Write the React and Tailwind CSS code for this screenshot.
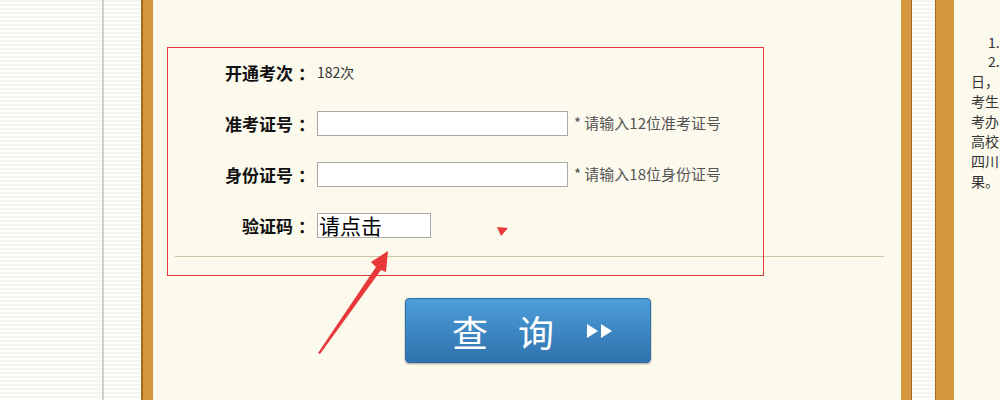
const stripes =
  'bg-[repeating-linear-gradient(to_bottom,#f4f4f1_0px,#f4f4f1_2px,#fdfdfc_2px,#fdfdfc_4px)]';

function Row({ label, children }) {
  return (
    <div className="flex items-center h-[25px]">
      <div className="w-[157px] flex justify-end text-[17px] font-bold text-[#111] leading-none">
        <span>{label}</span>
        <span className="w-[17px] pl-[5px] whitespace-nowrap overflow-visible">：</span>
      </div>
      <div className="ml-[7px] flex items-center">{children}</div>
    </div>
  );
}

function Hint({ children }) {
  return <span className="ml-[6px] text-[15px] text-[#555]">{children}</span>;
}

export default function App() {
  return (
    <div
      className="relative w-[1000px] h-[400px] overflow-hidden flex"
      style={{ fontFamily: '"Noto Sans CJK SC", "Noto Sans", sans-serif' }}
    >
      <div className={`w-[102px] ${stripes}`} />
      <div className="w-[2px] bg-[#cfcfcc]" />
      <div className={`w-[37px] ${stripes}`} />
      <div className="w-[12px] bg-[#d4963f] border-l-2 border-[#a56a22]" />

      {/* main panel */}
      <div className="relative w-[748px] bg-[#fcf9ed] pt-[60px]">
        <div className="flex flex-col gap-[26px]">
          <Row label="开通考次">
            <span className="text-[14px] text-[#333]">182次</span>
          </Row>
          <Row label="准考证号">
            <div className="w-[251px] h-[25px] bg-white border border-[#a9a9a9]" />
            <Hint>* 请输入12位准考证号</Hint>
          </Row>
          <Row label="身份证号">
            <div className="w-[251px] h-[25px] bg-white border border-[#a9a9a9]" />
            <Hint>* 请输入18位身份证号</Hint>
          </Row>
          <Row label="验证码">
            <div className="w-[114px] h-[25px] bg-white border border-[#a9a9a9] overflow-hidden text-[21px] leading-[23px] text-black pl-[1px]">
              请点击
            </div>
          </Row>
        </div>

        <div className="ml-[22px] mt-[18px] w-[709px] h-px bg-[#cbc3a2]" />

        <button className="ml-[252px] mt-[41px] w-[246px] h-[65px] rounded-[4px] border border-[#2b6aa1] bg-gradient-to-b from-[#4d9ed9] to-[#2f72ad] shadow-[0_1px_2px_rgba(0,0,0,0.35)] flex items-center pl-[46px] text-white">
          <span className="text-[36px] font-normal leading-none">查</span>
          <span className="ml-[30px] text-[36px] font-normal leading-none">询</span>
          <svg className="ml-[33px]" width="26" height="14" viewBox="0 0 26 14">
            <polygon points="0,0 11,7 0,14" fill="white" />
            <polygon points="14,0 25,7 14,14" fill="white" />
          </svg>
        </button>
      </div>

      <div className="w-[11px] bg-[#d4963f] border-r border-[#a56a22]" />
      <div className={`w-[23px] ${stripes}`} />
      <div className="w-[19px] bg-[#d4963f] border-l border-[#a56a22] shadow-[2px_0_3px_rgba(0,0,0,0.2)]" />

      {/* right column */}
      <div className="flex-1 bg-[#fcf9ed] pl-[17px] pt-[33px] text-[14px] leading-[20px] text-[#333] whitespace-nowrap overflow-hidden">
        <div className="pl-[17px] leading-[18px]">1.</div>
        <div className="pl-[17px] leading-[20px]">2.</div>
        <div>日，</div>
        <div>考生</div>
        <div>考办</div>
        <div>高校</div>
        <div>四川</div>
        <div>果。</div>
      </div>

      {/* annotations drawn over the screenshot */}
      <svg className="absolute inset-0 pointer-events-none" width="1000" height="400" viewBox="0 0 1000 400">
        <rect x="167.5" y="47.5" width="596" height="228" fill="none" stroke="#e0393b" strokeWidth="1" />
        <polygon
          points="318,353 376,267 371,262 388,251 386,272 381,270 320,354"
          fill="#e8383a"
        />
        <polygon points="497,227 508,228 501,236" fill="#e8383a" />
      </svg>
    </div>
  );
}
